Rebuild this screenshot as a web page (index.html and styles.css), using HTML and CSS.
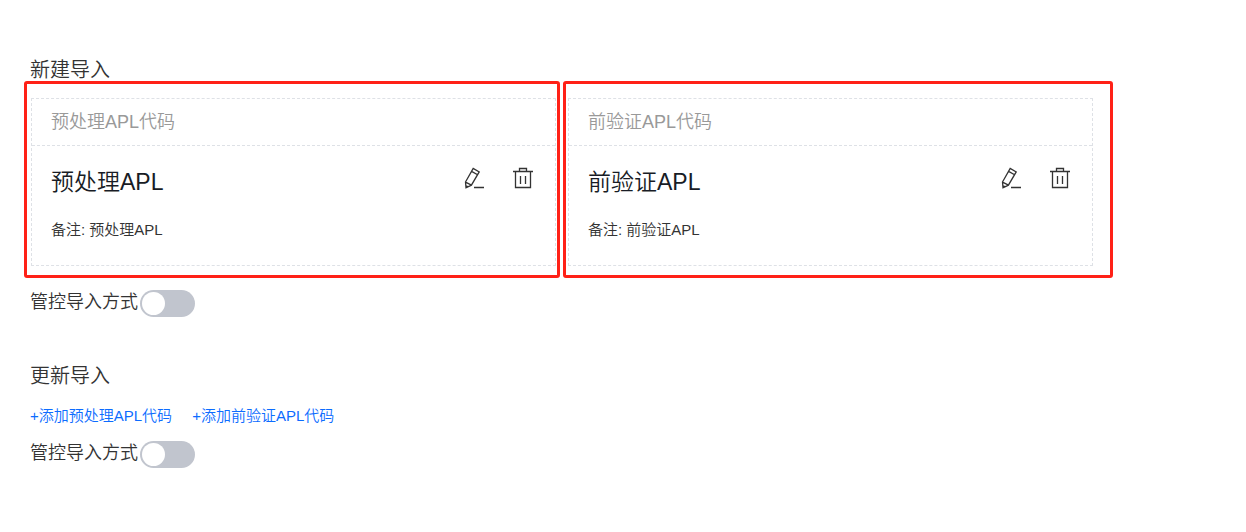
FILE: index.html
```html
<!DOCTYPE html>
<html lang="zh-CN">
<head>
    <meta charset="UTF-8">
    <meta name="viewport" content="width=device-width, initial-scale=1.0">
    <title>导入设置</title>
    <link rel="stylesheet" href="styles.css">
</head>
<body>
    <svg class="sprite" aria-hidden="true">
        <symbol id="icon-edit" viewBox="0 0 20 22">
            <path d="M1.5 15 9.2 1.5l6 3.4L7.4 18.2 2 20.8zM7.6 4.4l6 3.4M1.5 15.2l6 3M1.6 18.6l2.6 1.3M10 20.5h10"/>
        </symbol>
        <symbol id="icon-delete" viewBox="0 0 20 22">
            <path d="M0 4.5h20M6.5 4.5v-3h7v3M2.5 4.5v16h15v-16M7.5 9v8M12.5 9v8"/>
        </symbol>
    </svg>

    <main class="container">
        <section class="import-new">
            <h2>新建导入</h2>
            <div class="cards">
                <div class="frame">
                    <div class="card">
                        <div class="card-header">预处理APL代码</div>
                        <div class="card-body">
                            <div class="info">
                                <h3>预处理APL</h3>
                                <p>备注: 预处理APL</p>
                            </div>
                            <div class="actions">
                                <button type="button" aria-label="编辑"><svg><use href="#icon-edit"/></svg></button>
                                <button type="button" aria-label="删除"><svg><use href="#icon-delete"/></svg></button>
                            </div>
                        </div>
                    </div>
                </div>
                <div class="frame frame-last">
                    <div class="card">
                        <div class="card-header">前验证APL代码</div>
                        <div class="card-body">
                            <div class="info">
                                <h3>前验证APL</h3>
                                <p>备注: 前验证APL</p>
                            </div>
                            <div class="actions">
                                <button type="button" aria-label="编辑"><svg><use href="#icon-edit"/></svg></button>
                                <button type="button" aria-label="删除"><svg><use href="#icon-delete"/></svg></button>
                            </div>
                        </div>
                    </div>
                </div>
            </div>
            <div class="control">
                <label for="control-new">管控导入方式</label>
                <input type="checkbox" class="switch" id="control-new">
            </div>
        </section>

        <section class="import-update">
            <h2>更新导入</h2>
            <div class="links">
                <a href="#">+添加预处理APL代码</a>
                <a href="#">+添加前验证APL代码</a>
            </div>
            <div class="control">
                <label for="control-update">管控导入方式</label>
                <input type="checkbox" class="switch" id="control-update">
            </div>
        </section>
    </main>
</body>
</html>
```
FILE: styles.css
```css
* {
    box-sizing: border-box;
}
body {
    margin: 0;
    background-color: #fff;
    color: #333;
    font-family: "Liberation Sans", "Noto Sans CJK SC", sans-serif;
    font-weight: 350;
}
h2, h3, p {
    margin: 0;
    font-weight: 350;
}
h2 {
    font-size: 20px;
    line-height: 24px;
}
.sprite {
    display: none;
}
.container {
    padding: 58px 133px 40px 30px;
}
.cards {
    display: grid;
    grid-template-columns: 536fr 550fr;
    gap: 3px;
    margin-top: -1px;
    margin-left: -6px;
}
.frame {
    border: 3px solid #ff2117;
    border-radius: 3px;
    padding: 14px 1px 9px 4px;
}
.frame-last {
    padding-left: 2px;
    padding-right: 17px;
}
.card {
    border: 1px dashed #dee1e6;
}
.card-header {
    padding: 0 19px;
    border-bottom: 1px dashed #dee1e6;
    color: #999;
    font-size: 18px;
    line-height: 46px;
}
.card-body {
    display: flex;
    justify-content: space-between;
    align-items: flex-start;
    padding: 20px 22px 25px 19px;
}
.card-body h3 {
    color: #181c25;
    font-size: 23px;
    line-height: 32px;
}
.card-body p {
    margin-top: 22px;
    font-size: 15px;
    line-height: 20px;
}
.actions {
    display: flex;
    gap: 29px;
    padding-top: 1px;
}
.actions button {
    padding: 0;
    border: 0;
    background: none;
    cursor: pointer;
}
.actions svg {
    display: block;
    width: 20px;
    height: 22px;
    fill: none;
    stroke: #333;
    stroke-width: 1.3;
}
.control {
    display: flex;
    align-items: flex-start;
    gap: 2px;
    margin-top: 12px;
    font-size: 18px;
    line-height: 24px;
}
.switch {
    appearance: none;
    width: 55px;
    height: 27px;
    margin: 0;
    padding: 2px;
    border-radius: 14px;
    background-color: #c1c5ce;
    cursor: pointer;
}
.switch::before {
    content: "";
    display: block;
    width: 23px;
    height: 23px;
    border-radius: 50%;
    background-color: #fff;
}
.switch:checked {
    background-color: #0c6cff;
}
.switch:checked::before {
    margin-left: auto;
}
.import-update {
    margin-top: 47px;
}
.links {
    display: flex;
    gap: 20px;
    margin-top: 18px;
    font-size: 15px;
    line-height: 20px;
}
.links a {
    color: #0c6cff;
    text-decoration: none;
}
.import-update .control {
    margin-top: 15px;
}
```
